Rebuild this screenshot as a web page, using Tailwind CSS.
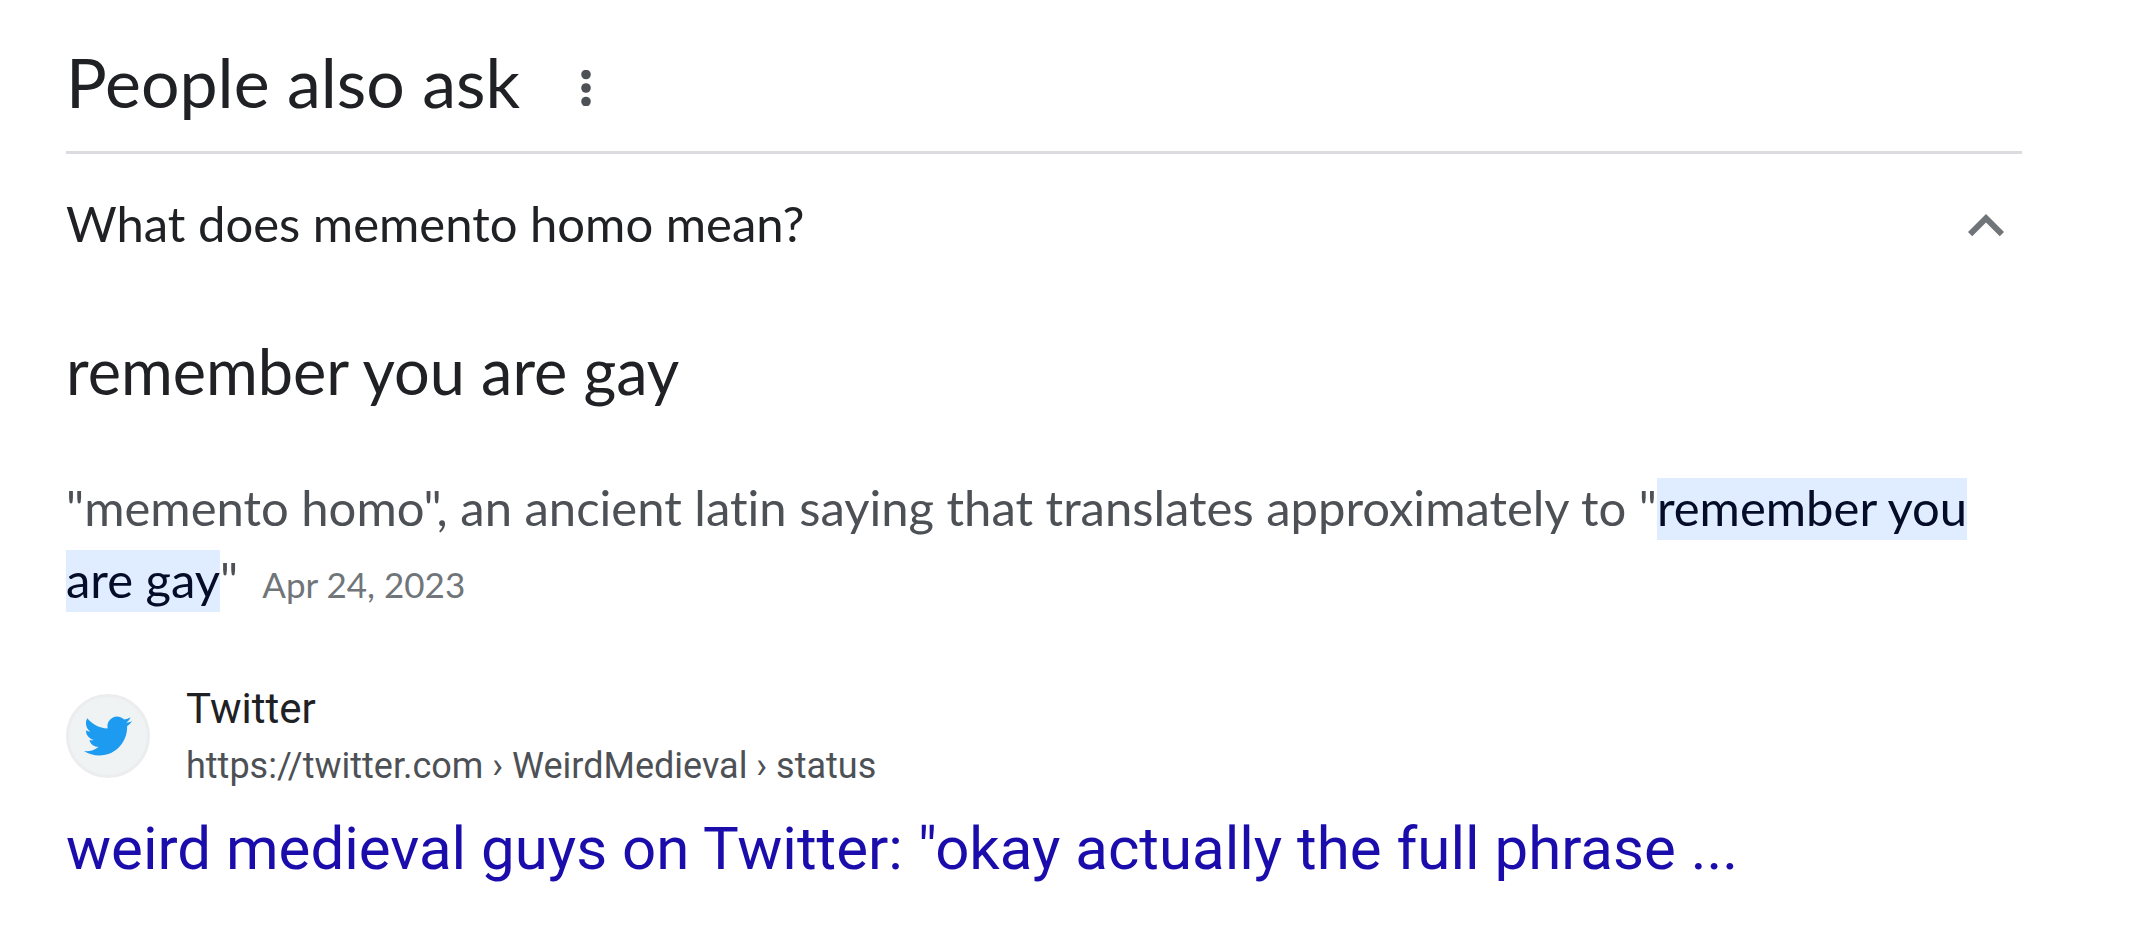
<!DOCTYPE html>
<html lang="en">
<head>
<meta charset="utf-8">
<meta name="viewport" content="width=device-width, initial-scale=1">
<title>People also ask</title>
<script src="https://cdn.jsdelivr.net/npm/@tailwindcss/browser@4"></script>
</head>
<body class="bg-white font-['Lato',sans-serif] text-[#202124] [font-variant-ligatures:none]">
<main class="pt-[42px] pr-[118px] pb-10 pl-[66px]">
  <header class="flex items-center gap-[38px] border-b-3 border-[#dadce0] pb-[29px]">
    <h2 class="text-[68px] leading-20">People also ask</h2>
    <button type="button" aria-label="About this result" class="flex h-20 w-14 items-center justify-center pt-3">
      <svg class="h-9 w-2.5" viewBox="0 0 10 36" fill="#4d5156"><circle cx="5" cy="4.5" r="4.8"/><circle cx="5" cy="18" r="4.8"/><circle cx="5" cy="31.5" r="4.8"/></svg>
    </button>
  </header>
  <section>
    <button type="button" aria-expanded="true" class="flex h-36 w-full items-center justify-between text-left">
      <span class="pb-1.5 text-[49px] leading-16">What does memento homo mean?</span>
      <svg class="size-18 shrink-0" viewBox="0 0 24 24" fill="#70757a"><path d="M12 8l-6 6 1.41 1.41L12 10.83l4.59 4.58L18 14z"/></svg>
    </button>
    <h3 class="mt-[33px] text-[63px] leading-20">remember you are gay</h3>
    <p class="mt-15 text-[49px] leading-[72px] text-[#4d5156]">"memento homo", an ancient latin saying that translates approximately to "<mark class="bg-[#e0ecff] pb-1 text-[#040c28]">remember you are gay</mark>"<time datetime="2023-04-24" class="ml-6 text-[35px] leading-none text-[#70757a]">Apr 24, 2023</time></p>
    <a href="https://twitter.com" class="mt-16 block font-['Roboto',sans-serif]">
      <span class="flex items-center gap-9">
        <span class="flex size-21 shrink-0 items-center justify-center rounded-full border-3 border-[#ebedef] bg-[#eff3f4]">
          <svg class="size-12" viewBox="0 0 24 24" fill="#1d9bf0"><path d="M23.953 4.57a10 10 0 01-2.825.775 4.958 4.958 0 002.163-2.723c-.951.555-2.005.959-3.127 1.184a4.92 4.92 0 00-8.384 4.482C7.69 8.095 4.067 6.13 1.64 3.162a4.822 4.822 0 00-.666 2.475c0 1.71.87 3.213 2.188 4.096a4.904 4.904 0 01-2.228-.616v.06a4.923 4.923 0 003.946 4.827 4.996 4.996 0 01-2.212.085 4.936 4.936 0 004.604 3.417 9.867 9.867 0 01-6.102 2.105c-.39 0-.779-.023-1.17-.067a13.995 13.995 0 007.557 2.209c9.053 0 13.998-7.496 13.998-13.985 0-.21 0-.42-.015-.63A9.935 9.935 0 0024 4.59z"/></svg>
        </span>
        <span class="flex flex-col">
          <span class="text-[42px] leading-[60px]">Twitter</span>
          <span class="text-[36px] leading-[54px] text-[#4d5156]">https://twitter.com › WeirdMedieval › status</span>
        </span>
      </span>
      <span class="mt-4 block text-[60px] leading-20 text-[#1a0dab]">weird medieval guys on Twitter: "okay actually the full phrase ...</span>
    </a>
  </section>
</main>
</body>
</html>
